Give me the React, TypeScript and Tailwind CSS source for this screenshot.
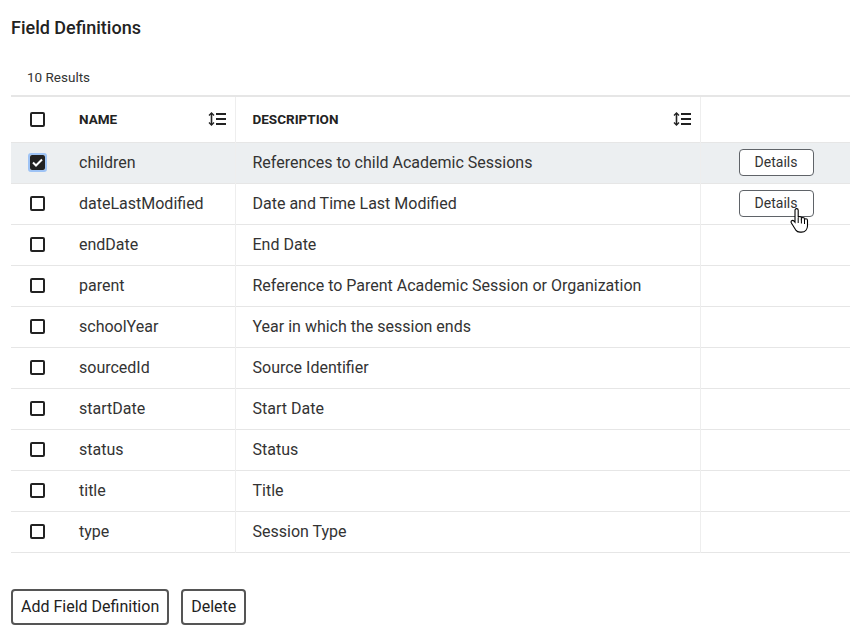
import React from "react";

const rows = [
  { name: "children", desc: "References to child Academic Sessions", checked: true, details: true },
  { name: "dateLastModified", desc: "Date and Time Last Modified", details: true, hover: true },
  { name: "endDate", desc: "End Date" },
  { name: "parent", desc: "Reference to Parent Academic Session or Organization" },
  { name: "schoolYear", desc: "Year in which the session ends" },
  { name: "sourcedId", desc: "Source Identifier" },
  { name: "startDate", desc: "Start Date" },
  { name: "status", desc: "Status" },
  { name: "title", desc: "Title" },
  { name: "type", desc: "Session Type" },
];

const SortIcon = () => (
  <svg width="18" height="14" viewBox="0 0 18 14" fill="none">
    <path d="M3.5 1.5v11" stroke="#222" strokeWidth="1.6" />
    <path d="M1 3.5l2.5-2.5 2.5 2.5M1 10.5l2.5 2.5 2.5-2.5" stroke="#222" strokeWidth="1.4" fill="none" />
    <path d="M8 2h10M8 7h10M8 12h10" stroke="#222" strokeWidth="1.8" />
  </svg>
);

const Checkbox = ({ checked }: { checked?: boolean }) =>
  checked ? (
    <div className="w-[19px] h-[19px] rounded-[3px] border-2 border-[#9ec3f5] flex items-center justify-center">
      <div className="w-[15px] h-[15px] rounded-[2px] bg-[#222] flex items-center justify-center">
        <svg width="11" height="9" viewBox="0 0 11 9">
          <path d="M1 4.5l3 3 6-6" stroke="#fff" strokeWidth="2" fill="none" />
        </svg>
      </div>
    </div>
  ) : (
    <div className="w-[15px] h-[15px] rounded-[2px] border-2 border-[#222] bg-white" />
  );

const HandCursor = () => (
  <svg width="20" height="26" viewBox="0 0 20 26" className="absolute left-[51px] top-[18px]">
    <path
      d="M5 2.2c0-.9.7-1.6 1.6-1.6s1.6.7 1.6 1.6v7.3c.3-.6.9-1 1.6-1 .9 0 1.6.7 1.6 1.6v.3c.3-.5.9-.9 1.5-.9.9 0 1.6.7 1.6 1.6v.4c.3-.4.8-.7 1.4-.7.9 0 1.6.7 1.6 1.6v5.4c0 3.7-2.5 6.3-6 6.3H10c-2 0-3.3-.8-4.4-2.3L1.4 15c-.6-.8-.4-1.800.3-2.3.7-.5 1.6-.3 2.2.3L5 14.3V2.2z"
      fill="#fff"
      stroke="#000"
      strokeWidth="1.1"
    />
    <path d="M8.2 10v5M11.4 11v4.5M14.5 12v4" stroke="#000" strokeWidth="1" />
  </svg>
);

export default function App() {
  return (
    <div className="w-[859px] h-[636px] bg-white pl-[11px] pt-[16px] font-['Roboto',sans-serif] text-[#333]">
      <h1 className="text-[18px] leading-[24px] font-medium text-[#222]">Field Definitions</h1>
      <div className="mt-[28px] pl-[16px] text-[13.5px] leading-[18px] text-[#333]">10 Results</div>

      <table className="mt-[9px] w-[839px] border-collapse table-fixed">
        <colgroup>
          <col className="w-[51px]" />
          <col className="w-[173px]" />
          <col className="w-[465px]" />
          <col className="w-[150px]" />
        </colgroup>
        <thead>
          <tr className="h-[46px] border-t-2 border-b border-[#e6e6e6]">
            <th className="pl-[19px] text-left align-middle">
              <Checkbox />
            </th>
            <th className="pl-[17px] pr-[9px] text-left border-r border-[#eeeeee]">
              <div className="flex items-center justify-between">
                <span className="text-[13.5px] font-bold text-[#222]">NAME</span>
                <SortIcon />
              </div>
            </th>
            <th className="pl-[17px] pr-[9px] text-left border-r border-[#eeeeee]">
              <div className="flex items-center justify-between">
                <span className="text-[13.5px] font-bold text-[#222]">DESCRIPTION</span>
                <SortIcon />
              </div>
            </th>
            <th />
          </tr>
        </thead>
        <tbody>
          {rows.map((r) => (
            <tr
              key={r.name}
              className={`h-[41px] border-b border-[#e6e6e6] ${r.checked ? "bg-[#eceff1]" : "bg-white"}`}
            >
              <td className={r.checked ? "pl-[17px]" : "pl-[19px]"}>
                <Checkbox checked={r.checked} />
              </td>
              <td className="pl-[17px] text-[16px] text-[#333] border-r border-[#eeeeee]">{r.name}</td>
              <td className="pl-[17px] text-[16px] text-[#333] border-r border-[#eeeeee]">{r.desc}</td>
              <td className="pl-[38px]">
                {r.details && (
                  <div className="relative w-[75px]">
                    <button className="w-[75px] h-[27px] rounded-[4px] border border-[#5f6368] bg-white text-[14px] text-[#333]">
                      Details
                    </button>
                    {r.hover && <HandCursor />}
                  </div>
                )}
              </td>
            </tr>
          ))}
        </tbody>
      </table>

      <div className="mt-[36px] flex gap-[12px]">
        <button className="h-[36px] px-[8px] rounded-[4px] border-2 border-[#555] bg-white text-[16px] text-[#222]">
          Add Field Definition
        </button>
        <button className="h-[36px] px-[8px] rounded-[4px] border-2 border-[#555] bg-white text-[16px] text-[#222]">
          Delete
        </button>
      </div>
    </div>
  );
}
